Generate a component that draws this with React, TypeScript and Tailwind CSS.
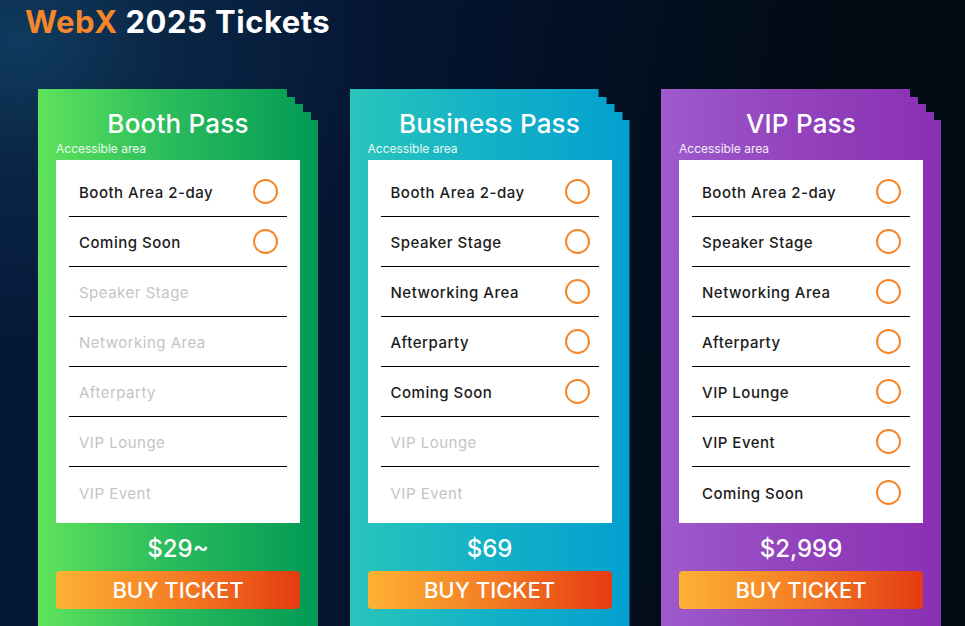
import React from "react";

type Item = { label: string; on: boolean };
type Card = {
  title: string;
  price: string;
  gradient: string;
  items: Item[];
};

const cards: Card[] = [
  {
    title: "Booth Pass",
    price: "$29~",
    gradient: "bg-[linear-gradient(90deg,#5fe35a_0%,#2cbd5c_45%,#019a55_100%)]",
    items: [
      { label: "Booth Area 2-day", on: true },
      { label: "Coming Soon", on: true },
      { label: "Speaker Stage", on: false },
      { label: "Networking Area", on: false },
      { label: "Afterparty", on: false },
      { label: "VIP Lounge", on: false },
      { label: "VIP Event", on: false },
    ],
  },
  {
    title: "Business Pass",
    price: "$69",
    gradient: "bg-[linear-gradient(90deg,#2ac5bb_0%,#15b3c6_45%,#03a0d0_100%)]",
    items: [
      { label: "Booth Area 2-day", on: true },
      { label: "Speaker Stage", on: true },
      { label: "Networking Area", on: true },
      { label: "Afterparty", on: true },
      { label: "Coming Soon", on: true },
      { label: "VIP Lounge", on: false },
      { label: "VIP Event", on: false },
    ],
  },
  {
    title: "VIP Pass",
    price: "$2,999",
    gradient: "bg-[linear-gradient(90deg,#9e5bcd_0%,#9444bd_45%,#8a30b3_100%)]",
    items: [
      { label: "Booth Area 2-day", on: true },
      { label: "Speaker Stage", on: true },
      { label: "Networking Area", on: true },
      { label: "Afterparty", on: true },
      { label: "VIP Lounge", on: true },
      { label: "VIP Event", on: true },
      { label: "Coming Soon", on: true },
    ],
  },
];

function TicketCard({ card }: { card: Card }) {
  return (
    <div
      className={`w-[280px] h-[560px] shrink-0 px-[18px] pt-[19px] text-white ${card.gradient} [clip-path:polygon(0_0,249px_0,249px_8px,257px_8px,257px_15px,265px_15px,265px_23px,273px_23px,273px_31px,280px_31px,280px_100%,0_100%)]`}
    >
      <div className="text-center text-[26px] leading-[32px] font-medium tracking-[0.2px]">
        {card.title}
      </div>
      <div className="mt-[2px] text-[12px] leading-[14px] text-white/90">Accessible area</div>
      <div className="mt-[4px] bg-white pt-[7px] pb-[6px]">
        {card.items.map((it, i) => (
          <div
            key={i}
            className={`mx-[13px] h-[50px] flex items-center justify-between ${
              i < card.items.length - 1 ? "border-b border-black" : ""
            }`}
          >
            <span
              className={`pl-[10px] pt-[3px] text-[15px] leading-[20px] tracking-[0.5px] ${
                it.on ? "text-[#1b1b1b] font-medium" : "text-[#c4c4c4] font-normal"
              }`}
            >
              {it.label}
            </span>
            {it.on && (
              <span className="mr-[9px] w-[25px] h-[25px] rounded-full border-2 border-[#f5862a]" />
            )}
          </div>
        ))}
      </div>
      <div className="mt-[11px] text-center text-[24px] leading-[30px] font-medium">{card.price}</div>
      <button className="mt-[7px] w-full h-[38px] rounded-[4px] bg-[linear-gradient(90deg,#fdb233_0%,#f47e25_50%,#e43b11_100%)] text-white text-[22px] font-medium leading-[38px]">
        BUY TICKET
      </button>
    </div>
  );
}

export default function App() {
  return (
    <div
      className="w-[965px] h-[626px] overflow-hidden bg-[#020c16] bg-[radial-gradient(ellipse_380px_300px_at_20px_40px,#0f3b5f_0%,#0a2645_40%,rgba(6,22,44,0)_100%),linear-gradient(100deg,#06193a_0%,#041430_40%,#020c16_75%,#020c12_100%)] font-['Inter',sans-serif]"
    >
      <div className="pl-[25px] pt-[4px] text-[31px] leading-[36px] font-bold tracking-[0.5px]">
        <span className="text-[#f5862a]">WebX</span>
        <span className="text-white"> 2025 Tickets</span>
      </div>
      <div className="mt-[49px] pl-[38px] flex gap-[31.5px]">
        {cards.map((c) => (
          <TicketCard key={c.title} card={c} />
        ))}
      </div>
    </div>
  );
}
